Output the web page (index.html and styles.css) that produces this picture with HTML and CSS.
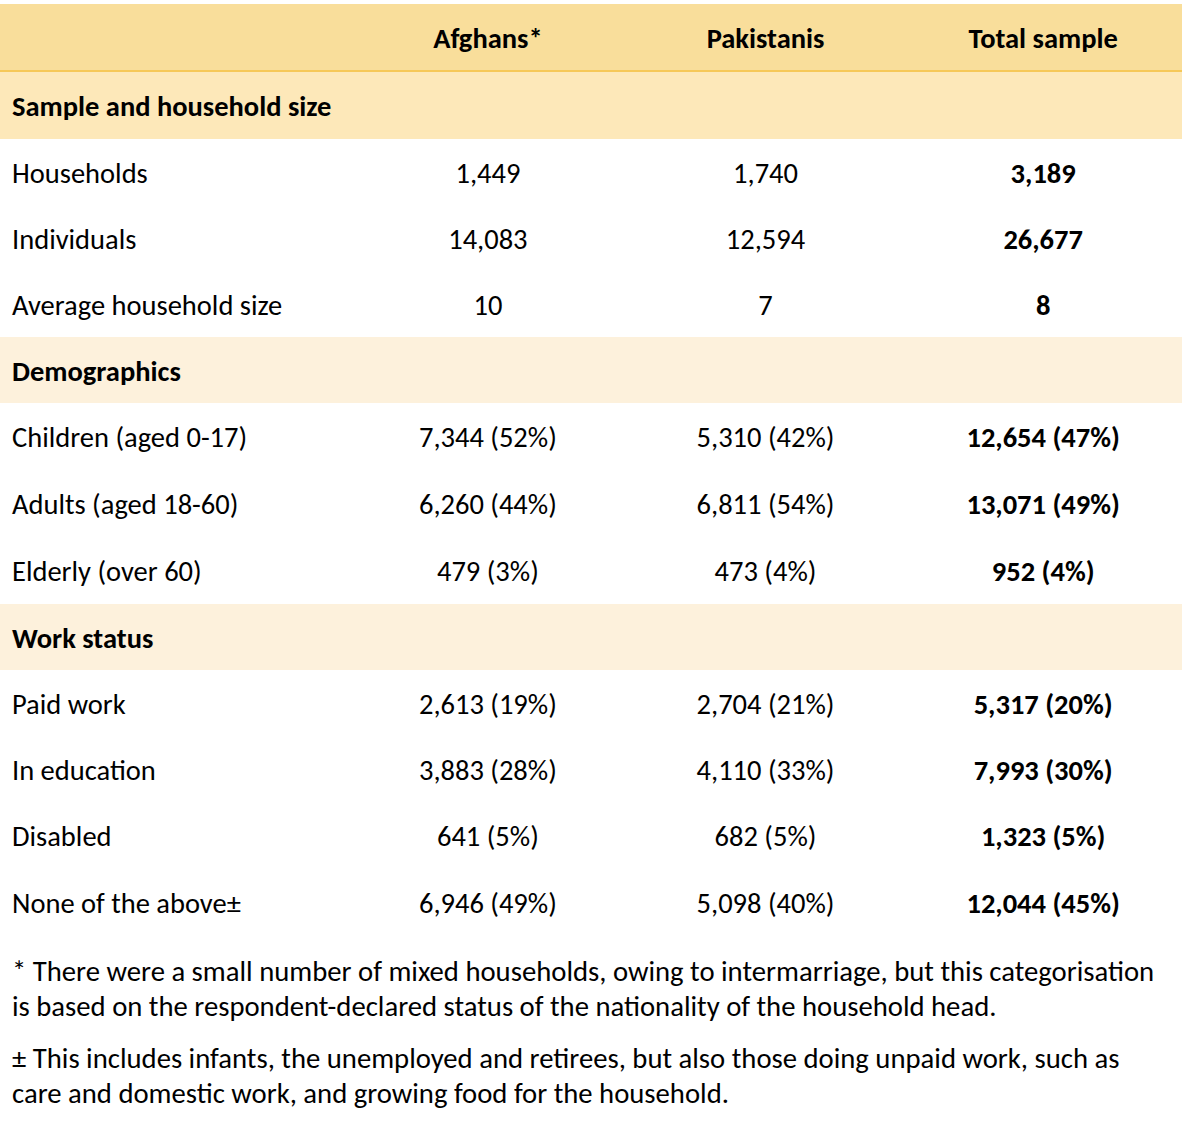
FILE: index.html
```html
<!DOCTYPE html>
<html lang="en">
<head>
<meta charset="utf-8">
<title>Sample overview</title>
<link rel="stylesheet" href="styles.css">
</head>
<body>
<div class="page">
  <table class="data">
    <colgroup>
      <col class="c-label">
      <col class="c-num">
      <col class="c-num">
      <col class="c-num">
    </colgroup>
    <thead>
      <tr class="head">
        <th></th>
        <th>Afghans*</th>
        <th>Pakistanis</th>
        <th>Total sample</th>
      </tr>
    </thead>
    <tbody>
      <tr class="section first"><td colspan="4">Sample and household size</td></tr>
      <tr><td>Households</td><td>1,449</td><td>1,740</td><td class="tot">3,189</td></tr>
      <tr><td>Individuals</td><td>14,083</td><td>12,594</td><td class="tot">26,677</td></tr>
      <tr><td>Average household size</td><td>10</td><td>7</td><td class="tot">8</td></tr>
      <tr class="section"><td colspan="4">Demographics</td></tr>
      <tr class="tall"><td>Children (aged 0-17)</td><td>7,344 (52%)</td><td>5,310 (42%)</td><td class="tot">12,654 (47%)</td></tr>
      <tr class="tall"><td>Adults (aged 18-60)</td><td>6,260 (44%)</td><td>6,811 (54%)</td><td class="tot">13,071 (49%)</td></tr>
      <tr class="tall"><td>Elderly (over 60)</td><td>479 (3%)</td><td>473 (4%)</td><td class="tot">952 (4%)</td></tr>
      <tr class="section"><td colspan="4">Work status</td></tr>
      <tr><td>Paid work</td><td>2,613 (19%)</td><td>2,704 (21%)</td><td class="tot">5,317 (20%)</td></tr>
      <tr><td>In education</td><td>3,883 (28%)</td><td>4,110 (33%)</td><td class="tot">7,993 (30%)</td></tr>
      <tr class="tall"><td>Disabled</td><td>641 (5%)</td><td>682 (5%)</td><td class="tot">1,323 (5%)</td></tr>
      <tr><td>None of the above±</td><td>6,946 (49%)</td><td>5,098 (40%)</td><td class="tot">12,044 (45%)</td></tr>
    </tbody>
  </table>
  <div class="notes">
    <p>* There were a small number of mixed households, owing to intermarriage, but this categorisation<br>is based on the respondent-declared status of the nationality of the household head.</p>
    <p>± This includes infants, the unemployed and retirees, but also those doing unpaid work, such as<br>care and domestic work, and growing food for the household.</p>
  </div>
</div>
</body>
</html>
```
FILE: styles.css
```css
html, body {
  margin: 0;
  padding: 0;
  background: #ffffff;
}
body {
  font-family: Carlito, Calibri, "Open Sans", "Liberation Sans", sans-serif;
  color: #000000;
  font-size: 28.5px;
}
.page {
  padding: 4px 12px 0 0;
}
.data {
  width: 1182px;
  border-collapse: collapse;
  table-layout: fixed;
}
.c-label { width: 349px; }
.c-num { width: 277.6px; }
.data th,
.data td {
  padding: 3px 0 0 0;
  height: 63px;
  line-height: 34px;
  text-align: center;
  vertical-align: middle;
}
.data td:first-child {
  text-align: left;
  padding-left: 12px;
}
.head th {
  background: #f9de9b;
  font-weight: 700;
  border-bottom: 2px solid #f6c858;
}
.section td {
  font-weight: 700;
  background: #fdf1dc;
  text-align: left;
}
.section.first td {
  background: #fde8b9;
  height: 64px;
}
.tall td { height: 64px; }
.tot { font-weight: 700; }
.notes {
  padding: 19px 0 0 12px;
  font-size: 28.7px;
}
.notes p {
  margin: 0 0 17px 0;
  line-height: 35px;
}
```
